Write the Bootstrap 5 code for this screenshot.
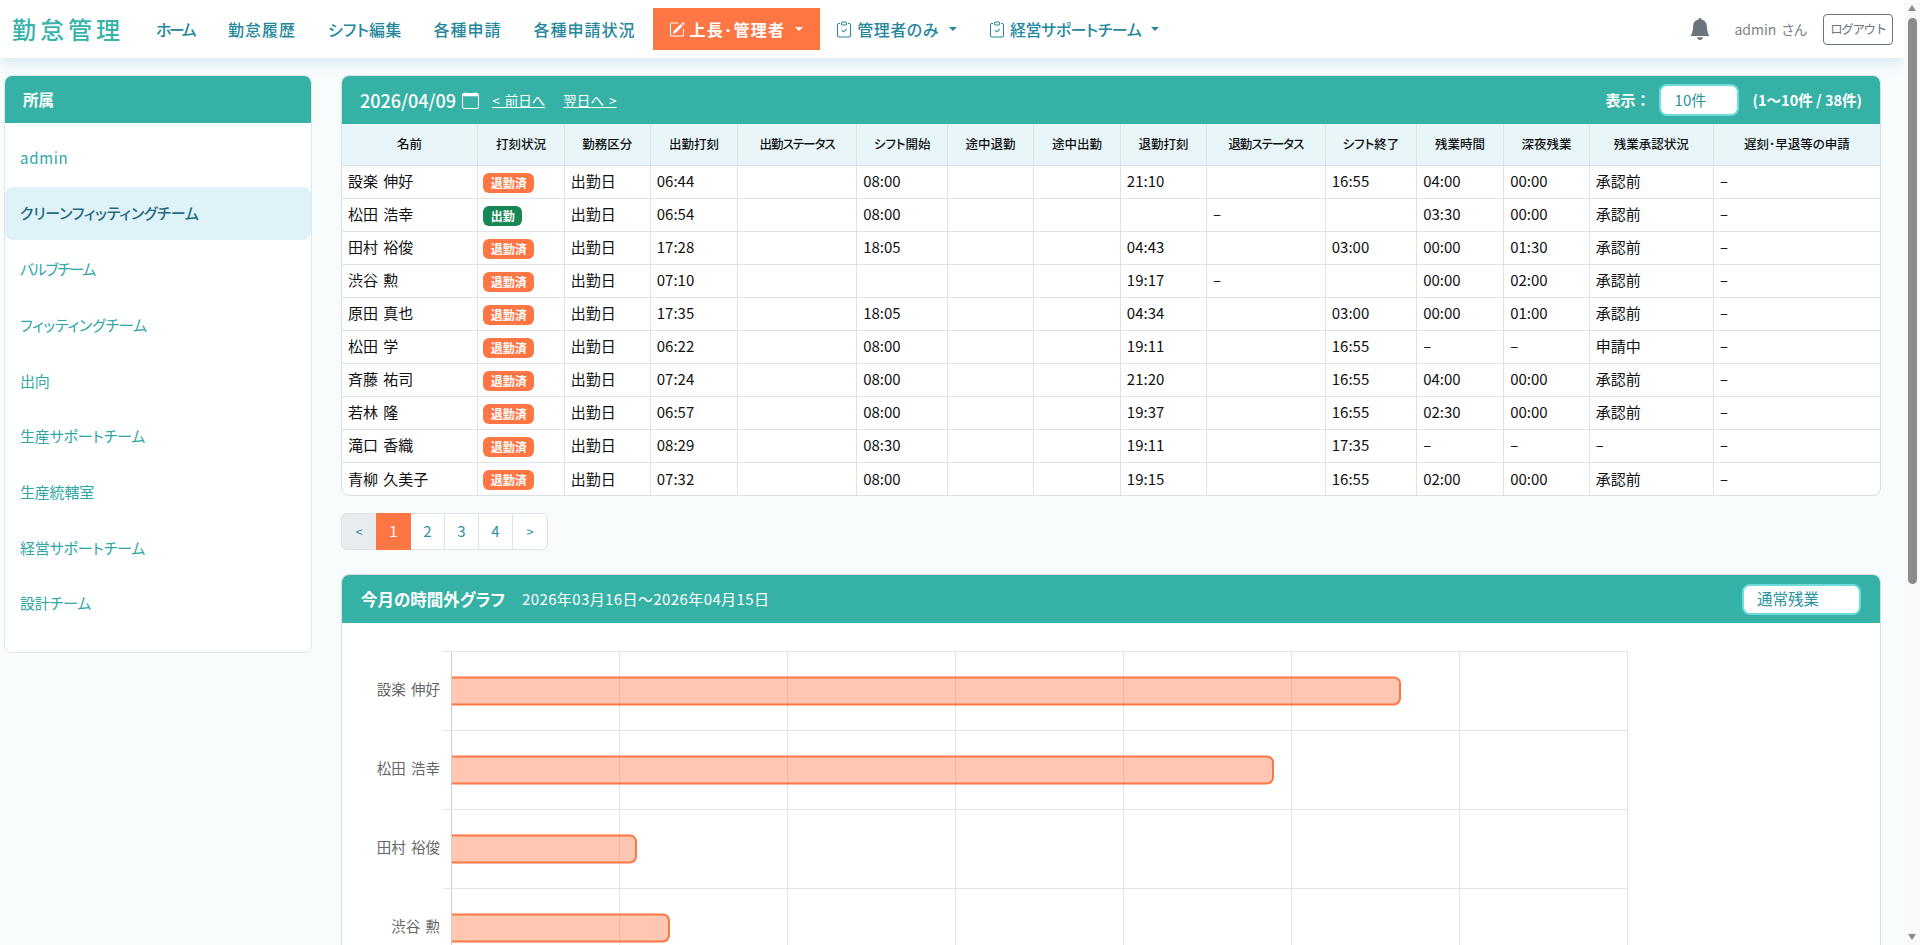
<!DOCTYPE html>
<html lang="ja">
<head>
    <meta charset="UTF-8">
    <meta name="viewport" content="width=device-width, initial-scale=1.0">
    <title>勤怠管理</title>
    <link href="https://cdn.jsdelivr.net/npm/bootstrap@5.3.0/dist/css/bootstrap.min.css" rel="stylesheet">
    <style>
        body { background: #f8fcfd; font-family: "Noto Sans CJK JP", sans-serif; color: #111; font-feature-settings: "palt"; margin-right: 16px; }
        .top-bar { height: 58px; background: #fff; padding: 0 11px 0 12px; box-shadow: 0 4px 14px rgba(90, 150, 180, .2); }
        .brand-name { font-size: 24px; font-weight: 500; letter-spacing: 4px; color: #38b3ab; margin-right: 16px; padding: 0; }
        .top-bar .nav-link { color: #25879c; font-size: 16px; font-weight: 500; letter-spacing: 1px; padding: 0 16px; height: 42px; display: flex; align-items: center; gap: 5px; }
        .top-bar .nav-link.home-link { letter-spacing: -2.6px; padding-right: 18px; }
        .top-bar .nav-link.shift-link { letter-spacing: .2px; }
        .top-bar .nav-link.admin-link { letter-spacing: .5px; }
        .top-bar .nav-link.team-link { letter-spacing: -.45px; }
        .top-bar .nav-link.boss-link { background: #ff7645; color: #fff; font-weight: 700; padding: 0 17px 0 16px; margin-left: 1px; letter-spacing: 1.3px; }
        .top-bar .dropdown-toggle::after { margin-left: 5px; }
        .nav-ico { width: 16px; height: 17px; fill: currentColor; flex: none; }
        .bell-ico { width: 22px; height: 22px; fill: #6c757d; }
        .user-name { color: #7d8387; font-size: 14px; margin: 0 16px 0 23px; word-spacing: 2px; }
        .logout-btn { font-size: 12.5px; letter-spacing: -1.4px; color: #6c757d; border: 1px solid #6c757d; padding: 0; width: 70px; height: 31px; line-height: 28px; border-radius: 4px; }
        .page-body { padding: 17px 23px 30px 4px; gap: 29px; align-items: flex-start; }
        .side-card { width: 308px; flex: none; border: 1px solid #dfe6ea; border-radius: 8px; overflow: hidden; padding-bottom: 19.5px; background: #fff; }
        .teal-head { background: #36b1a6; color: #fff; }
        .side-head { height: 47px; padding: 0 18px; display: flex; align-items: center; font-size: 15.5px; font-weight: 700; margin-bottom: 8.5px; }
        .side-item { display: flex; align-items: center; height: 53px; margin-bottom: 2.7px; padding: 0 15px; font-size: 15px; letter-spacing: -.2px; color: #2ea7a5; text-decoration: none; border-radius: 8px; }
        .side-item.now { background: #dff2f7; color: #1f6b82; font-weight: 500; }
        .side-item.latin-name { letter-spacing: .7px; }
        .side-item.tight-name { letter-spacing: -1.4px; }
        .main-col { flex: 1; min-width: 0; }
        .data-card { border: 1px solid #d9dfe3; border-radius: 8px; overflow: hidden; background: #fff; }
        .date-head { height: 48px; padding: 0 18px; display: flex; align-items: center; }
        .date-text { font-size: 18px; font-weight: 500; }
        .date-ico { width: 17px; height: 17px; fill: #fff; margin: 0 13px 0 6px; }
        .day-link { color: #fff; font-size: 13.5px; margin-right: 18px; word-spacing: 2px; }
        .head-label { font-size: 15px; font-weight: 700; margin-right: 8px; font-feature-settings: normal; }
        .head-select { background: #fff; border: 2px solid #6fdcdc; border-radius: 8px; width: 80px; height: 32px; color: #2a93a2; font-size: 15px; padding-left: 14px; display: flex; align-items: center; }
        .head-count { font-size: 14.5px; font-weight: 700; margin-left: 14px; }
        .work-table { table-layout: fixed; width: 100%; margin: 0; font-size: 15px; word-spacing: 2px; --bs-table-color: #111; }
        .work-table th, .work-table td { border: 1px solid #dfe2e6; padding: 0 6px; white-space: nowrap; vertical-align: middle; }
        .work-table tr > :last-child { border-right: 0; }
        .work-table tr > :first-child { border-left: 0; }
        .work-table tr:first-child th { border-top: 0; }
        .work-table tbody tr:last-child td { border-bottom: 0; }
        .work-table th { background: #e8f6fa; height: 41px; font-size: 12.5px; font-weight: 500; text-align: center; }
        .work-table th.kana-head { letter-spacing: -1px; }
        .work-table td { height: 33px; }
        .state-chip { display: inline-block; color: #fff; font-size: 12px; font-weight: 700; line-height: 20px; height: 20px; padding: 0 7.5px; margin-left: -1px; border-radius: 6px; vertical-align: middle; }
        .state-done { background: #ff7645; }
        .state-in { background: #198754; }
        .page-strip { margin: 17px 0 24px; }
        .page-strip .page-link { color: #2a93a2; font-size: 15px; height: 37px; width: 35px; padding: 0; display: flex; align-items: center; justify-content: center; border-color: #dee2e6; background: #fff; }
        .page-strip .page-item:first-child .page-link, .page-strip .page-item:last-child .page-link { width: 36px; font-size: 13px; }
        .page-strip .page-item:first-child .page-link { background: #e9ecef; }
        .page-strip .page-item.active .page-link { background: #ff7645; border-color: #ff7645; color: #fff; }
        .graph-head { height: 48px; padding: 0 19px; display: flex; align-items: center; }
        .graph-title { font-size: 16.5px; font-weight: 700; margin-right: 17px; }
        .graph-range { font-size: 15px; letter-spacing: .4px; }
        .graph-select { width: 119px; height: 31px; border: 2px solid #6fdcdc; border-radius: 8px; background: #fff; color: #2a93a2; font-size: 15.5px; padding-left: 13px; display: flex; align-items: center; }
        .graph-svg { display: block; width: 100%; }
        .graph-svg text { font-size: 14.5px; fill: #666; text-anchor: end; word-spacing: 2px; }
        .graph-grid { stroke: #e4e4e4; stroke-width: 1; }
        .graph-axis { stroke: #cfcfcf; stroke-width: 1; }
        .graph-bar { fill: rgba(255, 118, 69, .42); stroke: #ff7645; stroke-width: 2; }
        .fake-scroll { position: fixed; top: 0; right: 0; width: 16px; height: 100%; background: #fafafa; }
        .fake-thumb { position: absolute; top: 18px; left: 4px; width: 9px; height: 566px; border-radius: 5px; background: #8b8b8b; }
        .fake-arrow { position: absolute; left: 4px; width: 0; height: 0; border-left: 4.5px solid transparent; border-right: 4.5px solid transparent; }
        .fake-up { top: 5px; border-bottom: 6px solid #8b8b8b; }
        .fake-down { bottom: 5px; border-top: 6px solid #8b8b8b; }
    </style>
</head>
<body>
    <nav class="top-bar d-flex align-items-center">
        <a class="navbar-brand brand-name" href="#">勤怠管理</a>
        <ul class="nav flex-nowrap align-items-center">
            <li class="nav-item"><a class="nav-link home-link" href="#">ホーム</a></li>
            <li class="nav-item"><a class="nav-link" href="#">勤怠履歴</a></li>
            <li class="nav-item"><a class="nav-link shift-link" href="#">シフト編集</a></li>
            <li class="nav-item"><a class="nav-link" href="#">各種申請</a></li>
            <li class="nav-item"><a class="nav-link" href="#">各種申請状況</a></li>
            <li class="nav-item"><a class="nav-link boss-link dropdown-toggle" href="#">
                <svg class="nav-ico" viewBox="0 0 16 16"><path d="M15.502 1.94a.5.5 0 0 1 0 .706L14.459 3.69l-2-2L13.502.646a.5.5 0 0 1 .707 0l1.293 1.293zm-1.75 2.456-2-2L4.939 9.21a.5.5 0 0 0-.121.196l-.805 2.414a.25.25 0 0 0 .316.316l2.414-.805a.5.5 0 0 0 .196-.12l6.813-6.814z"/><path fill-rule="evenodd" d="M1 13.5A1.5 1.5 0 0 0 2.5 15h11a1.5 1.5 0 0 0 1.5-1.5v-6a.5.5 0 0 0-1 0v6a.5.5 0 0 1-.5.5h-11a.5.5 0 0 1-.5-.5v-11a.5.5 0 0 1 .5-.5H9a.5.5 0 0 0 0-1H2.5A1.5 1.5 0 0 0 1 2.5v11z"/></svg>上長･管理者</a></li>
            <li class="nav-item"><a class="nav-link admin-link dropdown-toggle" href="#">
                <svg class="nav-ico" viewBox="0 0 16 16"><path fill-rule="evenodd" d="M10.854 7.146a.5.5 0 0 1 0 .708l-3 3a.5.5 0 0 1-.708 0l-1.5-1.5a.5.5 0 1 1 .708-.708L7.5 9.793l2.646-2.647a.5.5 0 0 1 .708 0z"/><path d="M4 1.5H3a2 2 0 0 0-2 2V14a2 2 0 0 0 2 2h10a2 2 0 0 0 2-2V3.5a2 2 0 0 0-2-2h-1v1h1a1 1 0 0 1 1 1V14a1 1 0 0 1-1 1H3a1 1 0 0 1-1-1V3.5a1 1 0 0 1 1-1h1v-1z"/><path d="M9.5 1a.5.5 0 0 1 .5.5v1a.5.5 0 0 1-.5.5h-3a.5.5 0 0 1-.5-.5v-1a.5.5 0 0 1 .5-.5h3zm-3-1A1.5 1.5 0 0 0 5 1.5v1A1.5 1.5 0 0 0 6.5 4h3A1.5 1.5 0 0 0 11 2.5v-1A1.5 1.5 0 0 0 9.5 0h-3z"/></svg>管理者のみ</a></li>
            <li class="nav-item"><a class="nav-link team-link dropdown-toggle" href="#">
                <svg class="nav-ico" viewBox="0 0 16 16"><path fill-rule="evenodd" d="M10.854 7.146a.5.5 0 0 1 0 .708l-3 3a.5.5 0 0 1-.708 0l-1.5-1.5a.5.5 0 1 1 .708-.708L7.5 9.793l2.646-2.647a.5.5 0 0 1 .708 0z"/><path d="M4 1.5H3a2 2 0 0 0-2 2V14a2 2 0 0 0 2 2h10a2 2 0 0 0 2-2V3.5a2 2 0 0 0-2-2h-1v1h1a1 1 0 0 1 1 1V14a1 1 0 0 1-1 1H3a1 1 0 0 1-1-1V3.5a1 1 0 0 1 1-1h1v-1z"/><path d="M9.5 1a.5.5 0 0 1 .5.5v1a.5.5 0 0 1-.5.5h-3a.5.5 0 0 1-.5-.5v-1a.5.5 0 0 1 .5-.5h3zm-3-1A1.5 1.5 0 0 0 5 1.5v1A1.5 1.5 0 0 0 6.5 4h3A1.5 1.5 0 0 0 11 2.5v-1A1.5 1.5 0 0 0 9.5 0h-3z"/></svg>経営サポートチーム</a></li>
        </ul>
        <div class="ms-auto d-flex align-items-center">
            <svg class="bell-ico" viewBox="0 0 16 16"><path d="M8 16a2 2 0 0 0 2-2H6a2 2 0 0 0 2 2zm.995-14.901a1 1 0 1 0-1.99 0A5.002 5.002 0 0 0 3 6c0 1.098-.5 6-2 7h14c-1.5-1-2-5.902-2-7 0-2.42-1.72-4.44-4.005-4.901z"/></svg>
            <span class="user-name">admin さん</span>
            <button class="btn logout-btn">ログアウト</button>
        </div>
    </nav>

    <div class="d-flex page-body">
        <aside class="side-card">
            <div class="teal-head side-head">所属</div>
            <a class="side-item latin-name" href="#">admin</a>
            <a class="side-item now" href="#">クリーンフィッティングチーム</a>
            <a class="side-item tight-name" href="#">バルブチーム</a>
            <a class="side-item" href="#">フィッティングチーム</a>
            <a class="side-item" href="#">出向</a>
            <a class="side-item" href="#">生産サポートチーム</a>
            <a class="side-item" href="#">生産統轄室</a>
            <a class="side-item" href="#">経営サポートチーム</a>
            <a class="side-item" href="#">設計チーム</a>
        </aside>

        <main class="main-col">
            <div class="data-card">
                <div class="teal-head date-head">
                    <span class="date-text">2026/04/09</span>
                    <svg class="date-ico" viewBox="0 0 16 16"><path d="M3.5 0a.5.5 0 0 1 .5.5V1h8V.5a.5.5 0 0 1 1 0V1h1a2 2 0 0 1 2 2v11a2 2 0 0 1-2 2H2a2 2 0 0 1-2-2V3a2 2 0 0 1 2-2h1V.5a.5.5 0 0 1 .5-.5zM1 4v10a1 1 0 0 0 1 1h12a1 1 0 0 0 1-1V4H1z"/></svg>
                    <a class="day-link" href="#">&lt; 前日へ</a>
                    <a class="day-link" href="#">翌日へ &gt;</a>
                    <span class="head-label ms-auto">表示：</span>
                    <div class="head-select">10件</div>
                    <span class="head-count">(1〜10件 / 38件)</span>
                </div>
                <table class="table work-table">
                    <colgroup id="workCols"></colgroup>
                    <thead><tr id="workHead"></tr></thead>
                    <tbody id="workRows"></tbody>
                </table>
            </div>

            <ul class="pagination page-strip">
                <li class="page-item"><a class="page-link" href="#">&lt;</a></li>
                <li class="page-item active"><a class="page-link" href="#">1</a></li>
                <li class="page-item"><a class="page-link" href="#">2</a></li>
                <li class="page-item"><a class="page-link" href="#">3</a></li>
                <li class="page-item"><a class="page-link" href="#">4</a></li>
                <li class="page-item"><a class="page-link" href="#">&gt;</a></li>
            </ul>

            <div class="data-card">
                <div class="teal-head graph-head">
                    <span class="graph-title">今月の時間外グラフ</span>
                    <span class="graph-range">2026年03月16日〜2026年04月15日</span>
                    <div class="graph-select ms-auto">通常残業</div>
                </div>
                <svg class="graph-svg" id="graph" viewBox="342 623 1538 830"></svg>
            </div>
        </main>
    </div>

    <div class="fake-scroll">
        <span class="fake-arrow fake-up"></span>
        <span class="fake-thumb"></span>
        <span class="fake-arrow fake-down"></span>
    </div>

    <script>
        const widths = [135.7,86.6,86,87.3,119.1,91.1,85.7,86.9,86.1,118.8,91.4,87,85.7,124.1,166.5];
        const heads = ['名前','打刻状況','勤務区分','出勤打刻','出勤ステータス','シフト開始','途中退勤','途中出勤','退勤打刻','退勤ステータス','シフト終了','残業時間','深夜残業','残業承認状況','遅刻･早退等の申請'];
        const rows = [
            ['設楽 伸好','退勤済','出勤日','06:44','','08:00','','','21:10','','16:55','04:00','00:00','承認前','–'],
            ['松田 浩幸','出勤','出勤日','06:54','','08:00','','','','–','','03:30','00:00','承認前','–'],
            ['田村 裕俊','退勤済','出勤日','17:28','','18:05','','','04:43','','03:00','00:00','01:30','承認前','–'],
            ['渋谷 勲','退勤済','出勤日','07:10','','','','','19:17','–','','00:00','02:00','承認前','–'],
            ['原田 真也','退勤済','出勤日','17:35','','18:05','','','04:34','','03:00','00:00','01:00','承認前','–'],
            ['松田 学','退勤済','出勤日','06:22','','08:00','','','19:11','','16:55','–','–','申請中','–'],
            ['斉藤 祐司','退勤済','出勤日','07:24','','08:00','','','21:20','','16:55','04:00','00:00','承認前','–'],
            ['若林 隆','退勤済','出勤日','06:57','','08:00','','','19:37','','16:55','02:30','00:00','承認前','–'],
            ['滝口 香織','退勤済','出勤日','08:29','','08:30','','','19:11','','17:35','–','–','–','–'],
            ['青柳 久美子','退勤済','出勤日','07:32','','08:00','','','19:15','','16:55','02:00','00:00','承認前','–']
        ];
        document.getElementById('workCols').innerHTML = widths.map(w => `<col style="width:${w}px">`).join('');
        document.getElementById('workHead').innerHTML = heads.map(h => `<th class="${h.includes('ステータス') ? 'kana-head' : ''}">${h}</th>`).join('');
        document.getElementById('workRows').innerHTML = rows.map(r => '<tr>' + r.map((c, i) => {
            if (i === 1) return `<td><span class="state-chip ${c === '出勤' ? 'state-in' : 'state-done'}">${c}</span></td>`;
            return `<td>${c}</td>`;
        }).join('') + '</tr>').join('');

        // bars: name and right end of the bar in px of the plot
        const bars = [['設楽 伸好',1400],['松田 浩幸',1273],['田村 裕俊',636],['渋谷 勲',669]];
        let svg = '';
        for (let x = 451.5, n = 0; n < 8; n++, x += 168) svg += `<line class="${n ? 'graph-grid' : 'graph-axis'}" x1="${x}" x2="${x}" y1="651" y2="1445"/>`;
        for (let y = 651.5, n = 0; n <= 10; n++, y += 79) svg += `<line class="graph-grid" x1="443" x2="1627" y1="${y}" y2="${y}"/>`;
        bars.forEach((b, i) => {
            const top = 677.5 + i * 79, bottom = top + 27;
            svg += `<path class="graph-bar" d="M452 ${top}H${b[1] - 6}a6 6 0 0 1 6 6V${bottom - 6}a6 6 0 0 1-6 6H452"/>`;
            svg += `<text x="440" y="${top + 17}">${b[0]}</text>`;
        });
        document.getElementById('graph').innerHTML = svg;
    </script>

    <script src="https://cdn.jsdelivr.net/npm/bootstrap@5.3.0/dist/js/bootstrap.bundle.min.js"></script>
</body>
</html>
